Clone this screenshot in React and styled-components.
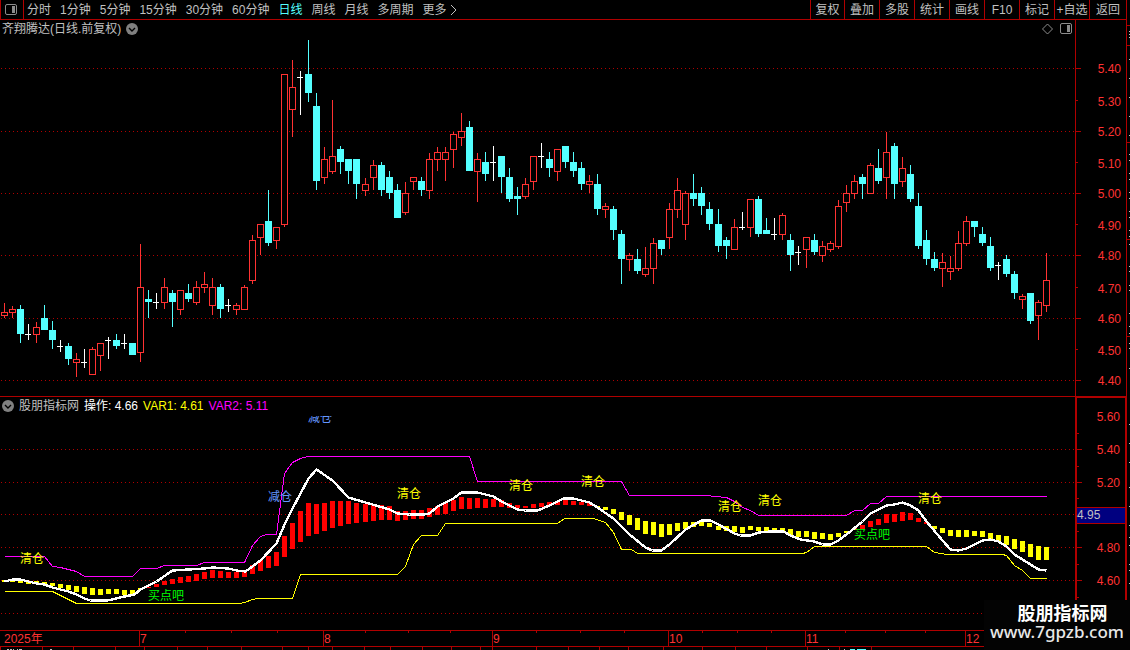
import React from 'react';
import styled, { createGlobalStyle } from 'styled-components';

const RED = '#b00000';
const LABEL_RED = '#ff3232';
const CYAN = '#54ffff';

const PERIODS = ['分时', '1分钟', '5分钟', '15分钟', '30分钟', '60分钟', '日线', '周线', '月线', '多周期'];
const TOOLS = ['复权', '叠加', '多股', '统计', '画线', 'F10', '标记', '+自选', '返回'];

// kind (r: up, c: down, w: flat), high, body top, body bottom, low
const CANDLES = [
    ['r', 303, 312, 316, 318], ['r', 306, 309, 313, 318], ['c', 305, 309, 334, 343], ['w', 324, 334, 335, 340],
    ['r', 322, 327, 335, 343], ['c', 305, 318, 330, 330], ['c', 321, 330, 340, 349], ['w', 340, 346, 347, 352],
    ['c', 343, 346, 359, 365], ['r', 353, 359, 363, 377], ['w', 349, 362, 363, 368], ['r', 347, 349, 375, 375],
    ['r', 343, 343, 356, 371], ['w', 337, 340, 341, 359], ['c', 334, 340, 346, 349], ['w', 334, 343, 344, 349],
    ['c', 343, 343, 355, 355], ['r', 244, 287, 353, 362], ['c', 290, 299, 302, 318], ['w', 293, 302, 303, 309],
    ['r', 278, 287, 303, 309], ['c', 290, 293, 302, 327], ['r', 290, 290, 310, 315], ['c', 284, 293, 299, 302],
    ['r', 281, 287, 303, 305], ['r', 272, 284, 288, 293], ['r', 278, 287, 306, 315], ['c', 284, 287, 309, 318],
    ['w', 299, 305, 306, 312], ['r', 303, 305, 310, 315], ['r', 285, 287, 310, 310], ['r', 235, 240, 281, 284],
    ['r', 224, 224, 238, 255], ['c', 190, 221, 243, 246], ['r', 227, 227, 241, 249], ['r', 74, 74, 225, 227],
    ['r', 60, 87, 110, 137], ['w', 71, 77, 78, 115], ['c', 40, 74, 93, 102], ['c', 93, 106, 181, 190],
    ['r', 147, 159, 178, 184], ['r', 100, 156, 172, 174], ['c', 146, 149, 162, 174], ['c', 159, 159, 171, 184],
    ['c', 159, 159, 184, 199], ['r', 178, 184, 191, 196], ['r', 160, 165, 178, 190], ['c', 162, 165, 190, 196],
    ['c', 171, 177, 193, 199], ['c', 184, 190, 218, 218], ['r', 182, 193, 213, 215], ['r', 177, 177, 182, 190],
    ['c', 177, 181, 190, 196], ['r', 153, 159, 191, 199], ['r', 147, 152, 160, 171], ['r', 147, 152, 160, 181],
    ['r', 132, 134, 150, 168], ['r', 113, 131, 138, 146], ['c', 121, 127, 171, 171], ['r', 153, 159, 172, 202],
    ['c', 152, 162, 174, 181], ['w', 146, 162, 163, 181], ['c', 156, 156, 177, 193], ['c', 168, 177, 199, 202],
    ['c', 187, 196, 199, 215], ['r', 178, 184, 197, 199], ['r', 156, 156, 182, 190], ['w', 143, 156, 157, 168],
    ['c', 152, 159, 168, 177], ['r', 149, 149, 172, 181], ['c', 146, 146, 162, 168], ['c', 152, 162, 171, 177],
    ['c', 162, 168, 184, 190], ['r', 175, 181, 185, 193], ['c', 174, 184, 209, 215], ['r', 203, 206, 210, 218],
    ['c', 206, 209, 230, 240], ['c', 230, 234, 259, 284], ['r', 253, 255, 260, 271], ['c', 249, 259, 271, 274],
    ['r', 247, 268, 275, 277], ['r', 238, 243, 269, 284], ['c', 240, 240, 249, 255], ['r', 203, 209, 238, 249],
    ['r', 178, 190, 210, 218], ['r', 191, 193, 225, 240], ['c', 174, 193, 199, 206], ['c', 187, 193, 206, 215],
    ['c', 202, 209, 224, 230], ['c', 209, 224, 246, 252], ['c', 237, 240, 246, 259], ['r', 219, 227, 250, 250],
    ['w', 212, 227, 228, 230], ['r', 199, 199, 228, 237], ['c', 196, 199, 234, 237], ['c', 218, 230, 234, 234],
    ['w', 218, 234, 235, 240], ['r', 213, 215, 235, 240], ['c', 234, 240, 255, 271], ['w', 246, 252, 253, 265],
    ['r', 237, 237, 250, 268], ['c', 234, 240, 252, 255], ['r', 241, 246, 256, 262], ['r', 241, 243, 250, 252],
    ['r', 200, 206, 247, 249], ['r', 185, 193, 203, 212], ['r', 175, 181, 194, 199], ['c', 174, 177, 184, 199],
    ['r', 163, 165, 194, 194], ['c', 149, 168, 181, 184], ['r', 132, 152, 178, 199], ['c', 143, 146, 184, 199],
    ['r', 157, 168, 182, 187], ['c', 165, 174, 199, 202], ['c', 193, 206, 246, 249], ['c', 230, 240, 259, 265],
    ['c', 252, 259, 268, 271], ['r', 253, 262, 269, 287], ['r', 256, 268, 272, 280], ['r', 231, 243, 269, 271],
    ['r', 216, 221, 244, 246], ['c', 221, 221, 227, 237], ['c', 227, 234, 243, 246], ['c', 237, 246, 268, 271],
    ['w', 262, 265, 266, 280], ['c', 255, 259, 274, 277], ['c', 271, 274, 293, 299], ['r', 294, 296, 300, 309],
    ['c', 293, 293, 321, 324], ['r', 300, 302, 316, 340], ['r', 253, 280, 306, 312],
];

// top and bottom of every indicator bar
const BARS = [
    [580, 582], [580, 582], [580, 583], [581, 584], [581, 584], [582, 585], [583, 586], [584, 588], [585, 590],
    [586, 592], [587, 594], [588, 595], [589, 595], [589, 594], [589, 594], [590, 595], [590, 595], [588, 590],
    [587, 588], [584, 587], [581, 585], [579, 584], [577, 583], [576, 582], [574, 581], [572, 579], [570, 578],
    [571, 578], [572, 578], [572, 578], [571, 577], [565, 574], [560, 571], [556, 568], [552, 566], [536, 557],
    [523, 549], [511, 542], [503, 536], [504, 534], [503, 531], [501, 528], [501, 526], [501, 524], [503, 523],
    [504, 522], [504, 521], [505, 520], [506, 520], [511, 521], [511, 520], [510, 519], [510, 519], [508, 517],
    [506, 515], [503, 514], [500, 511], [497, 509], [498, 509], [498, 508], [499, 508], [499, 507], [500, 507],
    [503, 508], [505, 508], [506, 508], [504, 508], [503, 507], [502, 506], [501, 505], [500, 505], [501, 505],
    [502, 505], [503, 506], [506, 508], [507, 510], [509, 514], [512, 520], [515, 525], [518, 530], [521, 534],
    [522, 535], [524, 537], [524, 535], [523, 531], [522, 529], [522, 527], [522, 526], [523, 527], [526, 530],
    [526, 531], [526, 532], [527, 533], [526, 530], [527, 531], [527, 531], [528, 531], [528, 532], [529, 535],
    [531, 537], [531, 537], [532, 539], [533, 539], [534, 540], [533, 537], [531, 533], [528, 530], [525, 529],
    [521, 527], [519, 525], [514, 523], [514, 522], [512, 521], [513, 520], [518, 522], [522, 524], [526, 529],
    [528, 533], [530, 536], [530, 537], [530, 537], [531, 536], [531, 537], [533, 539], [535, 542], [536, 545],
    [539, 549], [541, 552], [544, 557], [546, 560], [547, 560],
];

const WHITE_LINE = '4,581 12,579 20,579 28,581 36,583 44,584 52,587 60,589 68,591 76,594 84,598 90,600 107,600 124,596 134,594 140,589 156,581 172,570 188,569 204,568 212,567 228,568 236,570 245,571 260,560 276,543 284,524 292,508 300,493 308,478 316,469 332,480 348,497 389,509 397,513 409,514 423,514 429,513 437,506 453,498 461,492 477,492 493,496 501,501 517,509 525,510 537,510 549,505 563,498 573,498 589,502 597,507 613,518 629,534 645,547 652,550 661,550 669,544 685,529 701,520 710,520 718,524 734,533 740,535 750,535 758,532 770,531 783,531 790,535 800,539 814,541 822,544 830,544 838,540 846,534 862,521 870,513 886,505 894,504 902,502 910,505 918,510 926,521 942,540 950,549 958,550 966,548 982,540 990,539 998,541 1006,546 1014,554 1030,564 1038,569 1046,570';
const VAR2_LINE = '4,556 44,556 52,566 60,567 76,571 84,576 132,576 140,568 156,568 164,565 196,565 204,562 244,562 252,545 260,536 266,534 276,534 284,473 292,462 300,458 307,456 469,456 477,481 621,481 629,495 705,495 726,497 734,501 742,507 750,510 758,515 846,515 854,510 862,510 870,503 878,503 886,496 1046,496';
const VAR1_LINE = '4,591 52,591 60,595 76,603 239,603 244,602 252,599 258,598 292,598 300,574 397,574 405,566 413,544 421,535 437,535 445,523 557,523 564,518 593,518 605,522 613,532 621,549 631,549 637,553 802,553 806,552 814,546 926,546 934,552 947,554 1002,554 1006,555 1014,565 1022,570 1030,578 1046,578';

const NOTES = [
    [20, 563, '清仓', '#ffff00'], [268, 501, '减仓', '#6496ff'], [308, 422, '减仓', '#6496ff'],
    [397, 498, '清仓', '#ffff00'], [509, 490, '清仓', '#ffff00'], [581, 486, '清仓', '#ffff00'],
    [718, 511, '清仓', '#ffff00'], [758, 505, '清仓', '#ffff00'], [918, 503, '清仓', '#ffff00'],
    [148, 600, '买点吧', '#00ff00'], [854, 539, '买点吧', '#00ff00'],
];

const PRICE_GRID = [68, 131, 193, 255, 318, 380];
const PRICE_MINOR = [100, 162, 224, 287, 349];
const PRICE_LABELS = [
    [68, '5.40'], [101, '5.30'], [131, '5.20'], [163, '5.10'], [193, '5.00'], [225, '4.90'],
    [255, '4.80'], [288, '4.70'], [318, '4.60'], [350, '4.50'], [380, '4.40'],
];
const IND_GRID = [449, 482, 514, 547, 580, 613];
const IND_MINOR = [433, 466, 498, 531, 564, 597];
const IND_LABELS = [[416, '5.60'], [449, '5.40'], [482, '5.20'], [547, '4.80'], [580, '4.60']];

const MONTHS = [[139, '7'], [323, '8'], [492, '9'], [668, '10'], [805, '11'], [965, '12']];
const WEEK_TICKS = [185, 231, 277, 365, 408, 450, 536, 580, 624, 702, 737, 771, 845, 885, 925];
const FOOT_TICKS = [0, 42, 73, 115, 144, 177, 207, 241, 282, 308, 332, 364, 390, 422, 451, 480, 492, 536, 568, 599, 628, 663, 702, 735, 766, 807, 839, 871];
const SIDE_TICKS = [25, 45, 142, 239, 336];
const SIDE_DOTS = [59, 78, 97, 116, 135, 154, 160, 173, 179, 192, 198, 211, 217, 230, 236, 244, 266, 271, 285, 290, 313, 326, 333, 343, 348, 368, 424, 443, 462, 487, 506, 525, 537, 545, 564, 570, 583];

// the bar pitch is slightly over 8px, so it gains a pixel twice
const barX = (i) => 4 + 8 * i + (i >= 45 ? 1 : 0) + (i >= 89 ? 1 : 0);
const isRedBar = (i) => (i >= 18 && i <= 73) || (i >= 106 && i <= 115);

function Grid({ id, rows }) {
    return (
        <g>
            <defs>
                <pattern id={id} width="4" height="1" patternUnits="userSpaceOnUse">
                    <rect x="1" width="1" height="1" fill={RED} />
                </pattern>
            </defs>
            {rows.map((y) => <rect key={y} y={y} width="100%" height="1" fill={`url(#${id})`} />)}
        </g>
    );
}

function Candle({ x, data }) {
    const [kind, high, top, bottom, low] = data;
    const color = { r: LABEL_RED, c: CYAN, w: '#ffffff' }[kind];
    return (
        <g fill={color}>
            <rect x={x} y={high} width="1" height={low - high} />
            <rect x={x - 3} y={top} width={kind === 'w' ? 6 : 7} height={bottom - top} />
            {kind === 'r' && <rect x={x - 2} y={top + 1} width="5" height={bottom - top - 2} fill="#000" />}
        </g>
    );
}

function PriceChart() {
    return (
        <Plot $height={356} role="img" aria-label="日线">
            <g transform="translate(0 -40)">
                <Grid id="price-dots" rows={PRICE_GRID} />
                {CANDLES.map((c, i) => <Candle key={i} x={barX(i)} data={c} />)}
            </g>
        </Plot>
    );
}

function IndicatorChart() {
    return (
        <Plot $height={214} role="img" aria-label="股朋指标网">
            <g transform="translate(0 -416)">
                <Grid id="indicator-dots" rows={IND_GRID} />
                {BARS.map(([top, bottom], i) => (
                    <rect key={i} x={barX(i) - 2} y={top} width="5" height={bottom - top} fill={isRedBar(i) ? '#ff0000' : '#ffff00'} />
                ))}
                <g fill="none" transform="translate(0.5 0.5)">
                    <polyline points={VAR1_LINE} stroke="#ffff00" />
                    <polyline points={VAR2_LINE} stroke="#ff00ff" />
                    <polyline points={WHITE_LINE} stroke="#ffffff" strokeWidth="2.4" strokeLinejoin="round" />
                </g>
                {NOTES.map(([x, y, text, color]) => (
                    <text key={`${x}-${y}`} x={x} y={y} fill={color}>{text}</text>
                ))}
            </g>
        </Plot>
    );
}

function Scale({ height, offset, major, minor, labels }) {
    return (
        <Plot $height={height}>
            <g transform={`translate(0 ${-offset})`}>
                {major.map((y) => <rect key={y} y={y} width="5" height="1" fill={RED} />)}
                {minor.map((y) => <rect key={y} y={y} width="2" height="1" fill={RED} />)}
            </g>
            <ScaleLabels>
                {labels.map(([y, text]) => <text key={text} x="100%" dx="-5" y={y - offset + 5}>{text}</text>)}
            </ScaleLabels>
        </Plot>
    );
}

function RoundChevron() {
    return (
        <Icon width="12" height="12" viewBox="0 0 12 12">
            <circle cx="6" cy="6" r="6" fill="#808080" />
            <path d="M3 5l3 3 3-3" fill="none" stroke="#000" strokeWidth="1.4" />
        </Icon>
    );
}

function PanelIcon() {
    return (
        <Icon width="12" height="12" viewBox="0 0 12 12">
            <rect x="0.5" y="0.5" width="11" height="10" rx="1.5" fill="none" stroke="#8c8c8c" />
            <rect x="7" y="2" width="3" height="7" fill="#8c8c8c" />
        </Icon>
    );
}

function App() {
    return (
        <>
            <GlobalStyle />
            <Shell>
                <Main>
                    <Toolbar>
                        <LayoutButton aria-label="布局"><PanelIcon /></LayoutButton>
                        <Periods>
                            {PERIODS.map((name) => (
                                <PeriodButton key={name} $active={name === '日线'}>{name}</PeriodButton>
                            ))}
                            <PeriodButton>
                                更多
                                <Icon width="8" height="12" viewBox="0 0 8 12">
                                    <path d="M2 1l5 5-5 5" fill="none" stroke="#c0c0c0" />
                                </Icon>
                            </PeriodButton>
                        </Periods>
                        <Tools>
                            {TOOLS.map((name) => <ToolButton key={name}>{name}</ToolButton>)}
                        </Tools>
                    </Toolbar>

                    <Pane>
                        <PlotColumn>
                            <PlotHeader $height={20}>
                                <Title>齐翔腾达(日线.前复权)</Title>
                                <IconButton aria-label="展开"><RoundChevron /></IconButton>
                                <HeaderIcons>
                                    <IconButton aria-label="标记点">
                                        <Icon width="11" height="12" viewBox="0 0 11 12">
                                            <path d="M5.5 1L10.5 6l-5 5-5-5z" fill="none" stroke="#8c8c8c" />
                                        </Icon>
                                    </IconButton>
                                    <IconButton aria-label="侧栏"><PanelIcon /></IconButton>
                                </HeaderIcons>
                            </PlotHeader>
                            <PriceChart />
                        </PlotColumn>
                        <AxisColumn>
                            <Scale height={376} offset={20} major={PRICE_GRID} minor={PRICE_MINOR} labels={PRICE_LABELS} />
                        </AxisColumn>
                    </Pane>

                    <Pane>
                        <PlotColumn>
                            <PlotHeader $height={19}>
                                <IconButton aria-label="指标菜单"><RoundChevron /></IconButton>
                                <Title>股朋指标网</Title>
                                <Value $color="#ffffff">操作: 4.66</Value>
                                <Value $color="#ffff00">VAR1: 4.61</Value>
                                <Value $color="#ff00ff">VAR2: 5.11</Value>
                            </PlotHeader>
                            <IndicatorChart />
                        </PlotColumn>
                        <AxisColumn $thick>
                            <Scale height={232} offset={398} major={IND_GRID.slice(0, 5)} minor={IND_MINOR} labels={IND_LABELS} />
                            <CurrentValue>4.95</CurrentValue>
                        </AxisColumn>
                    </Pane>

                    <TimeAxis>
                        <Plot $height={15}>
                            <g fill={LABEL_RED}>
                                <text x="4" y="12">2025年</text>
                                {MONTHS.map(([x, text]) => <text key={text} x={x + 1} y="12">{text}</text>)}
                            </g>
                            {MONTHS.map(([x]) => <rect key={x} x={x} width="1" height="15" fill={RED} />)}
                            {WEEK_TICKS.map((x) => <rect key={x} x={x} width="1" height="2" fill={RED} />)}
                        </Plot>
                    </TimeAxis>
                    <Plot $height={3}>
                        {FOOT_TICKS.map((x) => <rect key={x} x={x} width="1" height="3" fill={RED} />)}
                        <path d="M7 2.5h2m1 0h2m1 0h1m3 0h1m1 0h3m28 0h2M828 2.5h1m15 0h1" stroke="#c0c0c0" />
                        <path d="M850 2.5h5m2 0h9" stroke={CYAN} />
                    </Plot>
                </Main>

                <SideStrip>
                    <Plot $height={650}>
                        {SIDE_TICKS.map((y) => <rect key={y} y={y} width="3" height="1" fill={RED} />)}
                        {SIDE_DOTS.map((y) => <rect key={y} x="2" y={y} width="1" height="1" fill="#c0c0c0" />)}
                        <path d="M2.5 31v1m0 2v1m0 2v1" stroke="#c0c0c0" />
                    </Plot>
                </SideStrip>

                <Watermark>
                    <SiteName>股朋指标网</SiteName>
                    <SiteUrl href="#">www.7gpzb.com</SiteUrl>
                </Watermark>
            </Shell>
        </>
    );
}

const GlobalStyle = createGlobalStyle`
    * {
        box-sizing: border-box;
    }

    body {
        margin: 0;
        background: #000000;
        color: #c0c0c0;
        font-family: "Liberation Sans", "Noto Sans CJK SC", sans-serif;
        font-size: 12px;
        line-height: 16px;
    }

    button {
        padding: 0;
        border: 0;
        background: none;
        color: inherit;
        font: inherit;
        cursor: pointer;
    }
`;

const Shell = styled.div`
    position: relative;
    display: flex;
    min-height: 100vh;
    overflow: hidden;
`;

const Main = styled.main`
    flex: 1;
    min-width: 0;
    display: flex;
    flex-direction: column;
`;

const Toolbar = styled.nav`
    display: flex;
    height: 20px;
    border-bottom: 1px solid ${RED};
    white-space: nowrap;
`;

const LayoutButton = styled.button`
    width: 24px;
    display: flex;
    align-items: center;
    justify-content: center;
    padding-right: 2px;
    border-left: 1px solid ${RED};
    border-right: 1px solid ${RED};
`;

const Periods = styled.div`
    flex: 1;
    display: flex;
    align-items: center;
    gap: 9px;
    padding-left: 3px;
`;

const PeriodButton = styled.button`
    display: flex;
    align-items: center;
    gap: 2px;
    color: ${({ $active }) => ($active ? CYAN : '#c0c0c0')};
`;

const Tools = styled.div`
    display: flex;
`;

const ToolButton = styled.button`
    width: 35px;
    border-left: 1px solid ${RED};

    &:first-child {
        width: 34px;
    }

    &:last-child {
        width: 37px;
    }
`;

const Pane = styled.section`
    display: flex;

    & + & {
        border-top: 1px solid ${RED};
    }
`;

const PlotColumn = styled.div`
    flex: 1;
    min-width: 0;
`;

const PlotHeader = styled.header`
    display: flex;
    align-items: center;
    gap: 5px;
    height: ${({ $height }) => $height}px;
    padding: 0 3px 2px 2px;
    white-space: nowrap;
`;

const Title = styled.span`
    color: #c0c0c0;
`;

const Value = styled.span`
    color: ${({ $color }) => $color};
`;

const HeaderIcons = styled.div`
    display: flex;
    gap: 7px;
    margin-left: auto;
`;

const IconButton = styled.button`
    display: flex;
`;

const Icon = styled.svg`
    display: block;
    flex: none;
`;

const AxisColumn = styled.div`
    position: relative;
    width: 51px;
    border: solid ${RED};
    border-width: ${({ $thick }) => ($thick ? '1px 1px 0 2px' : '0 0 0 1px')};
`;

const CurrentValue = styled.output`
    position: absolute;
    top: 109px;
    left: 0;
    right: 0;
    height: 17px;
    line-height: 15px;
    border: solid ${RED};
    border-width: 1px 0;
    background: #000080;
    color: #c0c0c0;
`;

const Plot = styled.svg`
    display: block;
    width: 100%;
    height: ${({ $height }) => $height}px;
    overflow: hidden;
    shape-rendering: crispEdges;
`;

const ScaleLabels = styled.g`
    fill: ${LABEL_RED};
    text-anchor: end;
`;

const TimeAxis = styled.footer`
    border-top: 1px solid ${RED};
    border-bottom: 1px solid ${RED};
`;

const SideStrip = styled.aside`
    width: 4px;
    border-left: 1px solid ${RED};
`;

const Watermark = styled.div`
    position: absolute;
    right: 0;
    bottom: 0;
    display: flex;
    flex-direction: column;
    align-items: center;
    width: 146px;
    height: 50px;
    padding-top: 5px;
    background: #030303;
    color: #ffffff;
`;

const SiteName = styled.strong`
    padding-left: 11px;
    font-size: 18px;
    line-height: 18px;
`;

const SiteUrl = styled.a`
    color: #e8e8e8;
    font-family: "Noto Sans", sans-serif;
    font-size: 17px;
    font-weight: 500;
    line-height: 18px;
    text-decoration: none;
`;

export default App;
